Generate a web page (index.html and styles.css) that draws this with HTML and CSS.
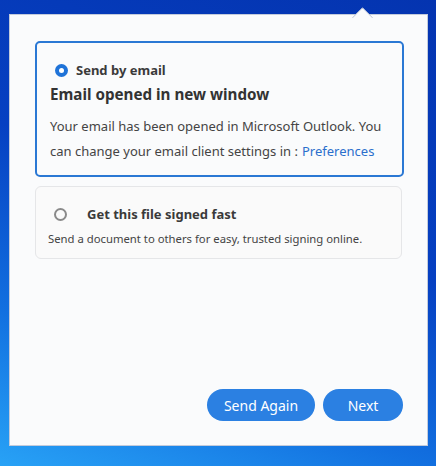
FILE: index.html
```html
<!DOCTYPE html>
<html>
<head>
<meta charset="utf-8">
<link rel="stylesheet" href="styles.css">
</head>
<body>
<div class="desktop">
  <div class="panel">
    <div class="arrow"></div>
    <div class="card card-active">
      <div class="radio-row">
        <span class="radio radio-on"></span>
        <span class="radio-label">Send by email</span>
      </div>
      <div class="heading">Email opened in new window</div>
      <p class="body">Your email has been opened in Microsoft Outlook. You can change your email client settings in :<a class="link" href="#">Preferences</a></p>
    </div>
    <div class="card card-idle">
      <div class="radio-row radio-row-idle">
        <span class="radio radio-off"></span>
        <span class="radio-label label-idle">Get this file signed fast</span>
      </div>
      <p class="desc">Send a document to others for easy, trusted signing online.</p>
    </div>
    <div class="spacer"></div>
    <div class="actions">
      <button class="btn btn-wide">Send Again</button>
      <button class="btn btn-narrow">Next</button>
    </div>
  </div>
</div>
</body>
</html>
```
FILE: styles.css
```css
html, body {
  margin: 0;
  padding: 0;
}
body {
  width: 436px;
  height: 466px;
  overflow: hidden;
  font-family: "Noto Sans", "Open Sans", sans-serif;
}
.desktop {
  width: 436px;
  height: 466px;
  background:
    linear-gradient(200deg, #0434b0 0%, #0640c2 45%, #1270e0 75%, #28a2f6 100%);
  padding: 14px 0 0 9px;
  box-sizing: border-box;
}
.panel {
  position: relative;
  width: 419px;
  height: 432px;
  box-sizing: border-box;
  background: #fafbfc;
  border: 1px solid #c3cbdb;
  display: flex;
  flex-direction: column;
  padding: 26px 24px 24px 25px;
}
.arrow {
  position: absolute;
  top: -5px;
  left: 345px;
  width: 14px;
  height: 14px;
  background: #fafbfc;
  border-left: 1px solid #b8c1d4;
  border-top: 1px solid #b8c1d4;
  border-top-left-radius: 2px;
  transform: rotate(45deg);
}
.card {
  box-sizing: border-box;
}
.card-active {
  width: 369px;
  border: 2px solid #2a78d4;
  border-radius: 5px;
  padding: 18px 13px 11px 13px;
  background: #fafbfc;
}
.card-idle {
  width: 367px;
  margin-top: 9px;
  border: 1px solid #e5e6e8;
  border-radius: 6px;
  padding: 18px 12px 11px 12px;
  background: #fafafa;
}
.radio-row {
  display: flex;
  align-items: center;
  height: 18px;
  padding-left: 5px;
}
.radio-row-idle {
  padding-left: 6px;
}
.radio {
  width: 13px;
  height: 13px;
  border-radius: 50%;
  box-sizing: border-box;
  flex: none;
}
.radio-on {
  background: #1f73d8;
  position: relative;
}
.radio-on::after {
  content: "";
  position: absolute;
  left: 4px;
  top: 4px;
  width: 5px;
  height: 5px;
  border-radius: 50%;
  background: #ffffff;
}
.radio-off {
  border: 2px solid #8a8a8a;
  background: #fafafa;
}
.radio-label {
  margin-left: 8px;
  font-size: 13px;
  font-weight: 700;
  color: #3a3a3a;
  line-height: 18px;
}
.label-idle {
  margin-left: 20px;
}
.heading {
  margin-top: 4px;
  font-size: 15.2px;
  font-weight: 700;
  color: #333333;
  line-height: 22px;
}
.body {
  margin: 9px 0 0 0;
  font-size: 13px;
  line-height: 25px;
  color: #444444;
}
.link {
  display: inline-block;
  margin-left: 4px;
  color: #2a6fcc;
  text-decoration: none;
}
.desc {
  margin: 8px 0 0 0;
  font-size: 11.3px;
  line-height: 16px;
  color: #444444;
}
.spacer {
  flex: 1;
}
.actions {
  display: flex;
  justify-content: flex-end;
  gap: 8px;
}
.btn {
  height: 32px;
  border: none;
  border-radius: 16px;
  background: #2b80e2;
  color: #ffffff;
  font-family: "Noto Sans", "Open Sans", sans-serif;
  font-size: 14px;
  padding: 0;
  cursor: pointer;
}
.btn-wide {
  width: 108px;
}
.btn-narrow {
  width: 80px;
}
```
